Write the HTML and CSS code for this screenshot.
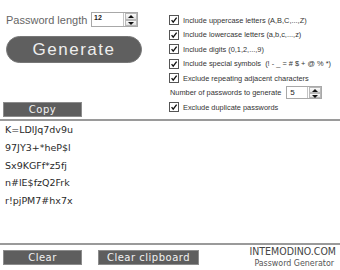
FILE: index.html
```html
<!DOCTYPE html>
<html lang="en">
<head>
    <meta charset="UTF-8">
    <meta name="viewport" content="width=device-width, initial-scale=1.0">
    <title>Password Generator</title>
    <link rel="stylesheet" href="styles.css">
</head>
<body>
    <div class="app">
        <div class="top">
            <div class="left">
                <div class="length-row">
                    <label class="length-label" for="length">Password length</label>
                    <div class="spinner spinner-length">
                        <span class="spin-value" id="length">12</span>
                        <span class="spin-btns"><span class="spin-up"></span><span class="spin-down"></span></span>
                    </div>
                </div>
                <button class="generate" type="button">Generate</button>
                <button class="bar-btn copy" type="button">Copy</button>
            </div>

            <div class="options">
                <div class="option"><span class="check"><svg viewBox="0 0 10 10"><path d="M2 5.2 L4 7.6 L8.3 2"/></svg></span><span class="label">Include uppercase letters (A,B,C,...,Z)</span></div>
                <div class="option"><span class="check"><svg viewBox="0 0 10 10"><path d="M2 5.2 L4 7.6 L8.3 2"/></svg></span><span class="label">Include lowercase letters (a,b,c,...,z)</span></div>
                <div class="option"><span class="check"><svg viewBox="0 0 10 10"><path d="M2 5.2 L4 7.6 L8.3 2"/></svg></span><span class="label">Include digits (0,1,2,...,9)</span></div>
                <div class="option"><span class="check"><svg viewBox="0 0 10 10"><path d="M2 5.2 L4 7.6 L8.3 2"/></svg></span><span class="label">Include special symbols&nbsp;&nbsp;(! - _ = # $ + @ % *)</span></div>
                <div class="option"><span class="check"><svg viewBox="0 0 10 10"><path d="M2 5.2 L4 7.6 L8.3 2"/></svg></span><span class="label">Exclude repeating adjacent characters</span></div>
                <div class="option number-row">
                    <span class="label">Number of passwords to generate</span>
                    <div class="spinner spinner-count">
                        <span class="spin-value">5</span>
                        <span class="spin-btns"><span class="spin-up"></span><span class="spin-down"></span></span>
                    </div>
                </div>
                <div class="option"><span class="check"><svg viewBox="0 0 10 10"><path d="M2 5.2 L4 7.6 L8.3 2"/></svg></span><span class="label">Exclude duplicate passwords</span></div>
            </div>
        </div>

        <div class="results">
            <div>K=LDlJq7dv9u</div>
            <div>97JY3+*heP$l</div>
            <div>Sx9KGFf*z5fj</div>
            <div>n#lE$fzQ2Frk</div>
            <div>r!pjPM7#hx7x</div>
        </div>

        <div class="footer">
            <button class="bar-btn clear" type="button">Clear</button>
            <button class="bar-btn clear-clip" type="button">Clear clipboard</button>
            <div class="brand">
                <div class="brand-name">INTEMODINO.COM</div>
                <div class="brand-sub">Password Generator</div>
            </div>
        </div>
    </div>
</body>
</html>
```

FILE: styles.css
```css
body {
    margin: 0;
    background: #fff;
    font-family: "Liberation Sans", Arial, sans-serif;
}

.app {
    width: 340px;
    height: 270px;
}

.top {
    display: flex;
    border-bottom: 2px solid #9a9a9a;
    box-sizing: border-box;
    height: 121px;
}

/* left column */
.left {
    width: 169px;
    box-sizing: border-box;
    padding: 12px 0 2px 6px;
    display: flex;
    flex-direction: column;
}

.length-row {
    display: flex;
    align-items: center;
    height: 15px;
}

.length-label {
    font-size: 11px;
    color: #666;
    width: 85px;
}

.spinner {
    display: flex;
    background: #fff;
    border: 1px solid #a8a8a8;
    box-sizing: border-box;
}

.spinner-length {
    width: 47px;
    height: 15px;
}

.spin-value {
    flex: 1;
    font-size: 7px;
    font-weight: bold;
    color: #222;
    padding: 1px 0 0 2px;
    line-height: 8px;
}

.spin-btns {
    width: 13px;
    display: flex;
    flex-direction: column;
    border-left: 1px solid #c4c4c4;
}

.spin-up,
.spin-down {
    flex: 1;
    position: relative;
    background: linear-gradient(#fafafa, #e2e2e2);
    border: 1px solid #b8b8b8;
    margin: 0 0 0 1px;
}

.spin-up::after,
.spin-down::after {
    content: "";
    position: absolute;
    left: 50%;
    top: 50%;
    margin: -1px 0 0 -3px;
    border-left: 3px solid transparent;
    border-right: 3px solid transparent;
}

.spin-up::after {
    border-bottom: 3px solid #111;
}

.spin-down::after {
    border-top: 3px solid #111;
}

.generate {
    margin-top: 9px;
    width: 136px;
    height: 27px;
    border: 1px solid #777;
    border-radius: 14px;
    background: #5f5f5f;
    color: #eee;
    font-family: "Liberation Sans", Arial, sans-serif;
    font-size: 17px;
    letter-spacing: 1.5px;
    padding: 0;
}

.bar-btn {
    height: 15px;
    padding: 0;
    background: #5e5e5e;
    border: 1px solid #8c8c8c;
    color: #f2f2f2;
    font-family: "DejaVu Sans", Verdana, sans-serif;
    font-size: 10px;
    letter-spacing: 0.5px;
    line-height: 12px;
}

.copy {
    margin-top: auto;
    margin-left: -3px;
    width: 79px;
}

/* right column */
.options {
    padding-top: 13px;
    font-size: 7.4px;
    color: #333;
}

.option {
    display: flex;
    align-items: center;
    height: 14.5px;
    white-space: nowrap;
}

.check {
    width: 10px;
    height: 10px;
    border: 1px solid #555;
    box-sizing: border-box;
    background: #fff;
    margin-right: 4px;
    display: flex;
}

.check svg {
    width: 100%;
    height: 100%;
    fill: none;
    stroke: #111;
    stroke-width: 1.7;
}

.number-row {
    padding-left: 1px;
}

.spinner-count {
    width: 36px;
    height: 13px;
    margin-left: 5px;
}

.spinner-count .spin-value {
    font-size: 8px;
    font-weight: normal;
    padding: 2px 0 0 3px;
}

/* results */
.results {
    height: 124px;
    box-sizing: border-box;
    border-bottom: 2px solid #9a9a9a;
    padding-left: 5px;
    font-family: "DejaVu Sans", Verdana, sans-serif;
    font-size: 9.5px;
    line-height: 17.8px;
    color: #2a2a2a;
}

/* footer */
.footer {
    display: flex;
    align-items: flex-start;
    padding: 5px 4px 0 3px;
}

.clear {
    width: 79px;
}

.clear-clip {
    width: 101px;
    margin-left: 16px;
}

.brand {
    margin-left: auto;
    text-align: right;
    font-family: "DejaVu Sans Condensed", "DejaVu Sans", sans-serif;
    margin-top: -5px;
}

.brand-name {
    font-size: 10.5px;
    color: #444;
    line-height: 12px;
}

.brand-sub {
    font-size: 8.8px;
    color: #555;
    line-height: 12px;
    padding-right: 2px;
}
```
